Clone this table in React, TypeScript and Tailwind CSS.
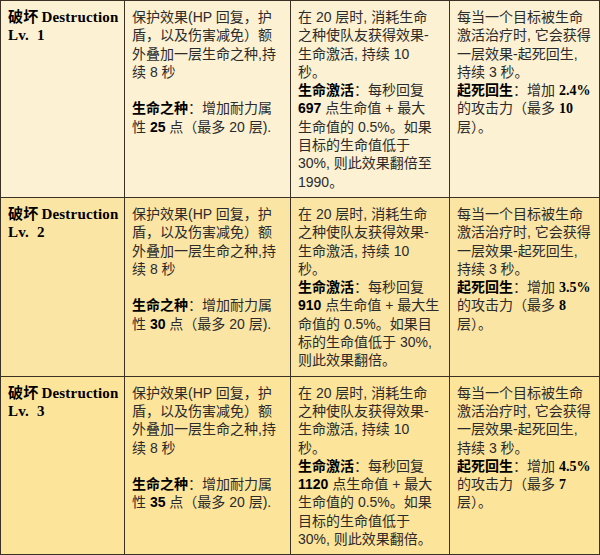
import type { ReactNode } from "react"

interface Tier {
  level: number
  stamina: number
  boost: string
  maxStacks: number
  bg: string
  burstLines: ReactNode[]
}

const cjk = "font-['Liberation_Sans','Noto_Sans_CJK_SC',sans-serif]"
const serifBold = "font-['Liberation_Serif','Noto_Sans_CJK_SC',serif] font-bold text-black"

function B({ children }: { children: ReactNode }) {
  return <span className="font-bold text-black">{children}</span>
}

function SB({ children }: { children: ReactNode }) {
  return <span className={serifBold}>{children}</span>
}

// Each cell keeps the line breaks of the original table
function Lines({ lines }: { lines: ReactNode[] }) {
  return (
    <div className="flex flex-col">
      {lines.map((line, i) => (
        <div key={i} className="whitespace-nowrap h-[18.3px]">
          {line === "" ? "\u00a0" : line}
        </div>
      ))}
    </div>
  )
}

const burstHead: ReactNode[] = [
  "在 20 层时, 消耗生命",
  "之种使队友获得效果-",
  "生命激活, 持续 10",
  "秒。",
  <><B>生命激活</B>：每秒回复</>,
]

const tiers: Tier[] = [
  {
    level: 1,
    stamina: 25,
    boost: "2.4%",
    maxStacks: 10,
    bg: "bg-[#fcf1d2]",
    burstLines: [
      ...burstHead,
      <><B>697</B> 点生命值 + 最大</>,
      "生命值的 0.5%。如果",
      "目标的生命值低于",
      "30%, 则此效果翻倍至",
      "1990。",
    ],
  },
  {
    level: 2,
    stamina: 30,
    boost: "3.5%",
    maxStacks: 8,
    bg: "bg-[#fbe5a5]",
    burstLines: [
      ...burstHead,
      <><B>910</B> 点生命值 + 最大生</>,
      "命值的 0.5%。如果目",
      "标的生命值低于 30%,",
      "则此效果翻倍。",
    ],
  },
  {
    level: 3,
    stamina: 35,
    boost: "4.5%",
    maxStacks: 7,
    bg: "bg-[#fde49b]",
    burstLines: [
      ...burstHead,
      <><B>1120</B> 点生命值 + 最大</>,
      "生命值的 0.5%。如果",
      "目标的生命值低于",
      "30%, 则此效果翻倍。",
    ],
  },
]

const cell = "border border-[#3a3124] align-top px-[7px] pt-[7px] pb-[6px]"

export default function App() {
  return (
    <div className={`w-[600px] h-[555px] bg-[#f8edd3] text-[14px] leading-[18.3px] text-[#2b2b2b] ${cjk}`}>
      <table className="border-collapse table-fixed w-[599px]">
        <colgroup>
          <col className="w-[124px]" />
          <col className="w-[166px]" />
          <col className="w-[159px]" />
          <col className="w-[150px]" />
        </colgroup>
        <tbody>
          {tiers.map((t) => (
            <tr key={t.level} className={t.bg}>
              <td className={cell}>
                <div className="text-[15px] tracking-[0.2px]">
                  <Lines
                    lines={[
                      <><B>破坏</B><span className="ml-[3px]"><SB>Destruction</SB></span></>,
                      <SB>Lv.{"\u00a0\u00a0"}{t.level}</SB>,
                    ]}
                  />
                </div>
              </td>
              <td className={cell}>
                <Lines
                  lines={[
                    "保护效果(HP 回复，护",
                    "盾，以及伤害减免）额",
                    "外叠加一层生命之种,持",
                    "续 8 秒",
                    "",
                    <><B>生命之种</B>：增加耐力属</>,
                    <>性 <B>{t.stamina}</B> 点（最多 20 层).</>,
                  ]}
                />
              </td>
              <td className={cell}>
                <Lines lines={t.burstLines} />
              </td>
              <td className={cell}>
                <Lines
                  lines={[
                    "每当一个目标被生命",
                    "激活治疗时, 它会获得",
                    "一层效果-起死回生,",
                    "持续 3 秒。",
                    <><B>起死回生</B>：增加 <SB>{t.boost}</SB></>,
                    <>的攻击力（最多 <SB>{t.maxStacks}</SB></>,
                    "层）。",
                  ]}
                />
              </td>
            </tr>
          ))}
        </tbody>
      </table>
    </div>
  )
}
